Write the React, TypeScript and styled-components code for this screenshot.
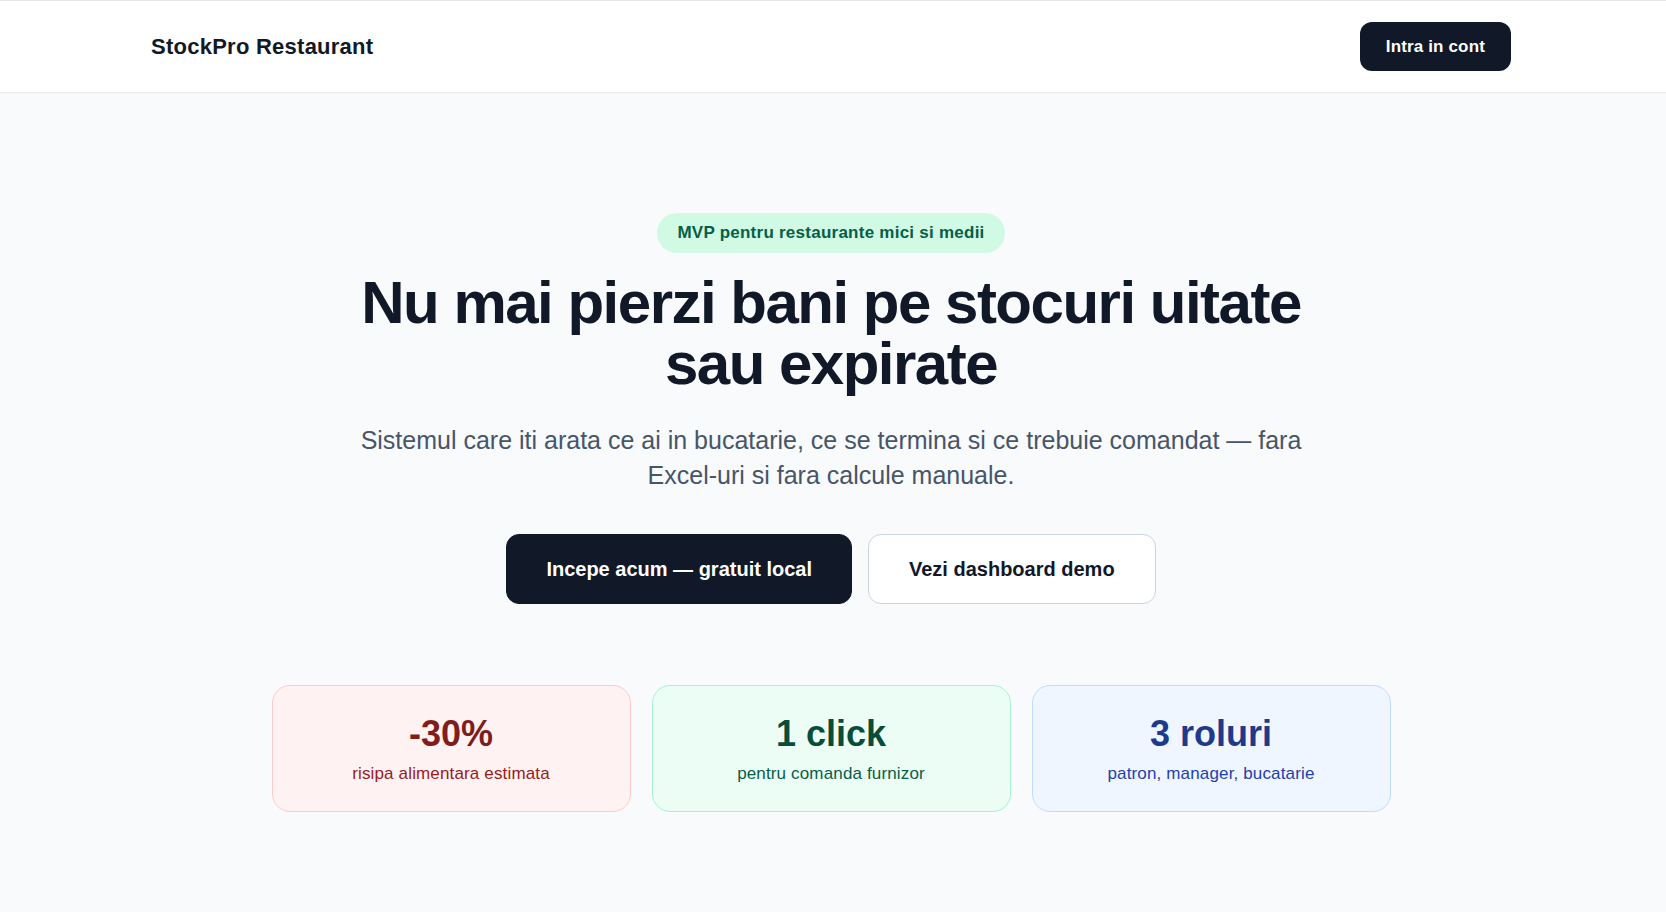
import React from 'react'
import styled, { createGlobalStyle, css } from 'styled-components'

const Colors = {
  ink: '#111827',
  slate: '#475569',
  line: '#e5e7eb',
  page: '#f8fafc',
  white: '#ffffff',
}

type Tone = 'red' | 'green' | 'blue'

const tones: Record<Tone, { bg: string; border: string; value: string; label: string }> = {
  red: { bg: '#fef2f2', border: '#fecaca', value: '#7f1d1d', label: '#991b1b' },
  green: { bg: '#ecfdf5', border: '#a7f3d0', value: '#064e3b', label: '#065f46' },
  blue: { bg: '#eff6ff', border: '#bfdbfe', value: '#1e3a8a', label: '#1e40af' },
}

const GlobalStyle = createGlobalStyle`
  * {
    box-sizing: border-box;
  }
  body {
    margin: 0;
    background: ${Colors.page};
    font-family: 'Liberation Sans', Arial, sans-serif;
    color: ${Colors.ink};
  }
`

const Header = styled.header`
  background: ${Colors.white};
  border-top: 1px solid ${Colors.line};
  border-bottom: 1px solid ${Colors.line};
`

const HeaderInner = styled.div`
  max-width: 1364px;
  margin: 0 auto;
  padding: 21px 4px 21px 0;
  display: flex;
  align-items: center;
  justify-content: space-between;
`

const Brand = styled.span`
  font-size: 22px;
  font-weight: 700;
  letter-spacing: 0.25px;
  color: ${Colors.ink};
`

const buttonBase = css`
  font-family: inherit;
  font-weight: 700;
  cursor: pointer;
  white-space: nowrap;
`

const NavButton = styled.button`
  ${buttonBase}
  height: 49px;
  padding: 0 26px;
  border: none;
  border-radius: 12px;
  background: ${Colors.ink};
  color: ${Colors.white};
  font-size: 17px;
  letter-spacing: 0.15px;
`

const Hero = styled.section`
  display: flex;
  flex-direction: column;
  align-items: center;
  text-align: center;
  padding: 120px 28px 100px 24px;
`

const Badge = styled.span`
  display: inline-block;
  padding: 7px 20px;
  border-radius: 999px;
  background: #d1fae5;
  color: #065f46;
  font-size: 17px;
  line-height: 26px;
  font-weight: 700;
  letter-spacing: 0.25px;
`

const Title = styled.h1`
  max-width: 1000px;
  margin: 19px 0 0;
  font-size: 60px;
  line-height: 61px;
  font-weight: 700;
  letter-spacing: -1.5px;
  color: ${Colors.ink};
`

const Lead = styled.p`
  max-width: 960px;
  margin: 29px 0 0;
  font-size: 25px;
  line-height: 35px;
  color: ${Colors.slate};
`

const Actions = styled.div`
  display: flex;
  gap: 16px;
  margin-top: 41px;
`

const CtaButton = styled.button<{ $primary?: boolean }>`
  ${buttonBase}
  height: 70px;
  padding: 0 ${({ $primary }) => ($primary ? 39 : 40)}px;
  border-radius: 13px;
  font-size: 20px;
  ${({ $primary }) =>
    $primary
      ? css`
          background: ${Colors.ink};
          color: ${Colors.white};
          border: 1px solid ${Colors.ink};
        `
      : css`
          background: ${Colors.white};
          color: ${Colors.ink};
          border: 1px solid #cbd5e1;
        `}
`

const Stats = styled.div`
  display: grid;
  grid-template-columns: repeat(3, 1fr);
  gap: 21px;
  width: 100%;
  max-width: 1119px;
  margin-top: 81px;
`

const StatCard = styled.div<{ $tone: Tone }>`
  padding: 27px 20px 25px;
  border-radius: 18px;
  border: 1px solid ${({ $tone }) => tones[$tone].border};
  background: ${({ $tone }) => tones[$tone].bg};
  display: flex;
  flex-direction: column;
  align-items: center;
  gap: 6px;
`

const StatValue = styled.span<{ $tone: Tone }>`
  font-size: 36px;
  line-height: 42px;
  font-weight: 700;
  color: ${({ $tone }) => tones[$tone].value};
`

const StatLabel = styled.span<{ $tone: Tone }>`
  font-size: 17px;
  line-height: 25px;
  letter-spacing: 0.15px;
  color: ${({ $tone }) => tones[$tone].label};
`

const stats: { tone: Tone; value: string; label: string }[] = [
  { tone: 'red', value: '-30%', label: 'risipa alimentara estimata' },
  { tone: 'green', value: '1 click', label: 'pentru comanda furnizor' },
  { tone: 'blue', value: '3 roluri', label: 'patron, manager, bucatarie' },
]

export default function App() {
  return (
    <>
      <GlobalStyle />
      <Header>
        <HeaderInner>
          <Brand>StockPro Restaurant</Brand>
          <NavButton>Intra in cont</NavButton>
        </HeaderInner>
      </Header>
      <Hero>
        <Badge>MVP pentru restaurante mici si medii</Badge>
        <Title>Nu mai pierzi bani pe stocuri uitate sau expirate</Title>
        <Lead>
          Sistemul care iti arata ce ai in bucatarie, ce se termina si ce trebuie comandat — fara
          Excel-uri si fara calcule manuale.
        </Lead>
        <Actions>
          <CtaButton $primary>Incepe acum — gratuit local</CtaButton>
          <CtaButton>Vezi dashboard demo</CtaButton>
        </Actions>
        <Stats>
          {stats.map((s) => (
            <StatCard key={s.tone} $tone={s.tone}>
              <StatValue $tone={s.tone}>{s.value}</StatValue>
              <StatLabel $tone={s.tone}>{s.label}</StatLabel>
            </StatCard>
          ))}
        </Stats>
      </Hero>
    </>
  )
}
